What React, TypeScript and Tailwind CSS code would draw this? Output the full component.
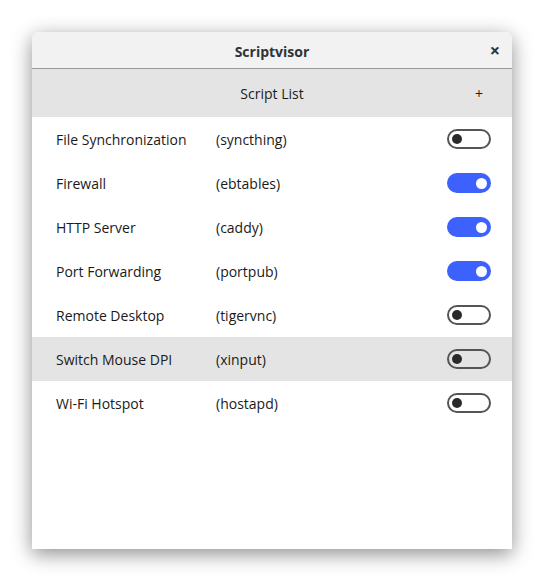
import React from "react";

const rows: { name: string; cmd: string; on: boolean; hl?: boolean }[] = [
  { name: "File Synchronization", cmd: "(syncthing)", on: false },
  { name: "Firewall", cmd: "(ebtables)", on: true },
  { name: "HTTP Server", cmd: "(caddy)", on: true },
  { name: "Port Forwarding", cmd: "(portpub)", on: true },
  { name: "Remote Desktop", cmd: "(tigervnc)", on: false },
  { name: "Switch Mouse DPI", cmd: "(xinput)", on: false, hl: true },
  { name: "Wi-Fi Hotspot", cmd: "(hostapd)", on: false },
];

function Toggle({ on }: { on: boolean }) {
  if (on) {
    return (
      <div className="w-[44px] h-[20px] rounded-full bg-[#3d61fd] flex items-center justify-end pr-[4px]">
        <div className="w-[11px] h-[11px] rounded-full bg-white" />
      </div>
    );
  }
  return (
    <div className="w-[44px] h-[20px] rounded-full border-2 border-[#555] flex items-center pl-[3px]">
      <div className="w-[10px] h-[10px] rounded-full bg-[#2a2a2a]" />
    </div>
  );
}

export default function App() {
  return (
    <div
      className="w-[544px] h-[581px] bg-white pt-[32px] pl-[32px]"
      style={{ fontFamily: '"Open Sans", "Noto Sans", sans-serif' }}
    >
      <div className="w-[480px] h-[517px] bg-white rounded-t-[7px] shadow-[0_5px_20px_rgba(0,0,0,0.45)] flex flex-col overflow-hidden">
        <div className="h-[37px] bg-[#f2f2f2] border-b border-[#9a9a9a] flex items-center relative">
          <div className="flex-1 text-center font-bold text-[14px] text-[#2e3436] pt-[2px]">Scriptvisor</div>
          <div className="absolute right-[12px] top-[8px] text-[18px] font-bold text-[#333] leading-[20px]">×</div>
        </div>
        <div className="h-[48px] bg-[#e4e4e4] flex items-center relative">
          <div className="flex-1 text-center text-[14px] text-[#1a1a1a]">Script List</div>
          <div className="absolute right-[29px] top-[14px] text-[14px] text-[#1a1a1a]">+</div>
        </div>
        <div className="flex flex-col">
          {rows.map((r) => (
            <div
              key={r.name}
              className={`h-[44px] flex items-center pl-[24px] pr-[21px] text-[14px] text-[#1a1a1a] ${r.hl ? "bg-[#e4e4e4]" : ""}`}
            >
              <div className="w-[160px]">{r.name}</div>
              <div className="flex-1">{r.cmd}</div>
              <Toggle on={r.on} />
            </div>
          ))}
        </div>
      </div>
    </div>
  );
}
